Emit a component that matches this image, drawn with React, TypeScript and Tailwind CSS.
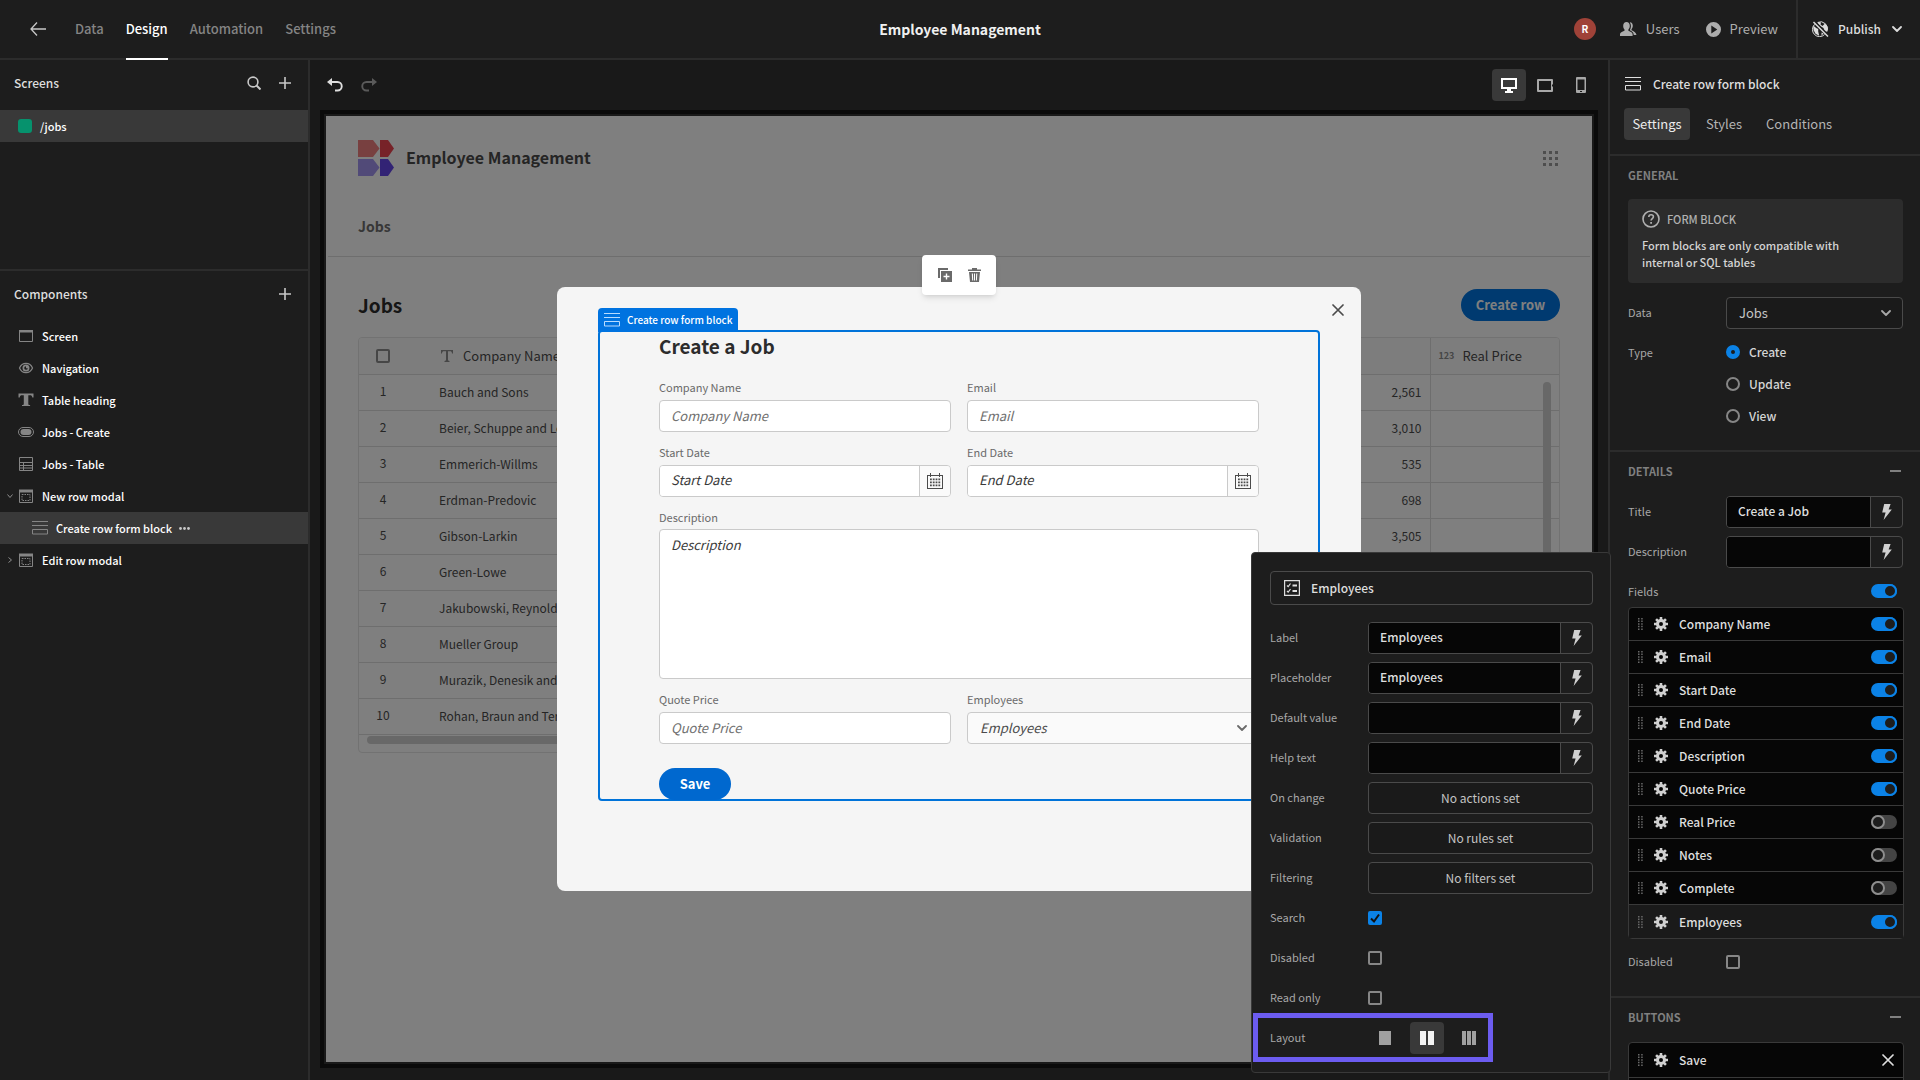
import { useId } from 'react';
import type { ReactNode } from 'react';

const COMPONENT_TREE = [
  { label: 'Screen', icon: 'screen' },
  { label: 'Navigation', icon: 'eye' },
  { label: 'Table heading', icon: 'text' },
  { label: 'Jobs - Create', icon: 'button' },
  { label: 'Jobs - Table', icon: 'table' },
  { label: 'New row modal', icon: 'modal', open: true },
  { label: 'Create row form block', icon: 'form', child: true },
  { label: 'Edit row modal', icon: 'modal', open: false },
];

const JOBS = [
  { name: 'Bauch and Sons', quote: '2,561' },
  { name: 'Beier, Schuppe and Lehner', quote: '3,010' },
  { name: 'Emmerich-Willms', quote: '535' },
  { name: 'Erdman-Predovic', quote: '698' },
  { name: 'Gibson-Larkin', quote: '3,505' },
  { name: 'Green-Lowe', quote: '1,240' },
  { name: 'Jakubowski, Reynolds and Co', quote: '2,118' },
  { name: 'Mueller Group', quote: '904' },
  { name: 'Murazik, Denesik and Sons', quote: '1,777' },
  { name: 'Rohan, Braun and Terry', quote: '2,032' },
];

const FIELDS = [
  { name: 'Company Name', on: true },
  { name: 'Email', on: true },
  { name: 'Start Date', on: true },
  { name: 'End Date', on: true },
  { name: 'Description', on: true },
  { name: 'Quote Price', on: true },
  { name: 'Real Price', on: false },
  { name: 'Notes', on: false },
  { name: 'Complete', on: false },
  { name: 'Employees', on: true },
];

/* ---------- icons ---------- */

function FormIcon() {
  return (
    <svg width="16" height="14" viewBox="0 0 16 14" fill="none" stroke="currentColor">
      <path d="M0 .5h16M0 4.5h16M.5 8.5h15v4.5H.5z" />
    </svg>
  );
}

function PlusIcon() {
  return (
    <svg width="12" height="12" viewBox="0 0 12 12" stroke="currentColor" strokeWidth="1.6">
      <path d="M6 0v12M0 6h12" />
    </svg>
  );
}

function ChevronIcon() {
  return (
    <svg width="10" height="6" viewBox="0 0 10 6" fill="none" stroke="currentColor" strokeWidth="1.8" strokeLinecap="round" strokeLinejoin="round">
      <path d="M1 1l4 4 4-4" />
    </svg>
  );
}

function CrossIcon() {
  return (
    <svg width="12" height="12" viewBox="0 0 12 12" stroke="currentColor" strokeWidth="1.7" strokeLinecap="round">
      <path d="M1 1l10 10M11 1L1 11" />
    </svg>
  );
}

function BoltIcon() {
  return (
    <svg width="10" height="16" viewBox="0 0 10 16" fill="currentColor">
      <path d="M2.2 0H8.6L6.6 5.4H9.8L1.6 16 3.6 8.6H.2z" />
    </svg>
  );
}

function GearIcon() {
  return (
    <svg width="14" height="14" viewBox="-7 -7 14 14" fill="currentColor">
      <circle r="3.5" fill="none" stroke="currentColor" strokeWidth="3" />
      {[0, 45, 90, 135].map((a) => (
        <path key={a} transform={`rotate(${a})`} d="M-1.3-7h2.6v3h-2.6zM-1.3 4h2.6v3h-2.6z" />
      ))}
    </svg>
  );
}

function GripIcon() {
  return (
    <svg width="5" height="12" viewBox="0 0 5 12" fill="currentColor">
      {[0, 2.6, 5.2, 7.8, 10.4].map((y) => (
        <path key={y} d={`M0 ${y}h1.5v1.5H0zM3.2 ${y}h1.5v1.5H3.2z`} />
      ))}
    </svg>
  );
}

function CalendarIcon() {
  return (
    <svg width="18" height="16" viewBox="0 0 18 16" fill="currentColor">
      <path fillRule="evenodd" d="M4 0h1v2h8V0h1v2h3v14H1V2h3zM2 3v12h14V3h-2v1h-1V3H5v1H4V3z" />
      {[5.4, 8.4, 11.4].map((y) => (
        <path key={y} d={`M4 ${y}h1.8v1.8H4zM6.8 ${y}h1.8v1.8H6.8zM9.6 ${y}h1.8v1.8H9.6zM12.4 ${y}h1.8v1.8H12.4z`} />
      ))}
    </svg>
  );
}

function TreeIcon({ type }: { type: string }) {
  if (type === 'form') return <FormIcon />;
  return (
    <svg width="16" height="14" viewBox="0 0 16 14" fill="none" stroke="currentColor">
      {type === 'screen' && (
        <>
          <path d="M1.5 1.5h13v11h-13z" />
          <path d="M1 1h14v2.5H1z" fill="currentColor" stroke="none" />
        </>
      )}
      {type === 'eye' && (
        <>
          <path d="M1.5 7C4 .8 12 .8 14.5 7 12 13.2 4 13.2 1.5 7z" strokeWidth="1.2" />
          <path fillRule="evenodd" d="M8 3.5a3.5 3.5 0 100 7 3.5 3.5 0 000-7zM8 5.2v2h1.8A1.8 1.8 0 118 5.2z" fill="currentColor" stroke="none" />
        </>
      )}
      {type === 'text' && (
        <path d="M.5.5h15v4h-1.2c-.3-1.6-.8-2.2-2.3-2.2h-1.7v8.4c0 1 .3 1.3 1.8 1.4v1H4v-1c1.5-.1 1.8-.4 1.8-1.4V2.3H4c-1.5 0-2 .6-2.3 2.2H.5z" fill="currentColor" stroke="none" />
      )}
      {type === 'button' && (
        <>
          <rect x=".5" y="2.5" width="15" height="9" rx="4.5" />
          <rect x="2.5" y="4" width="11" height="6" rx="3" fill="currentColor" stroke="none" />
        </>
      )}
      {type === 'table' && <path d="M1.5.5h13v13h-13zM1.5 5.5h13M1.5 8.5h13M1.5 11h13M5.5 5.5v8" />}
      {type === 'modal' && (
        <>
          <path d="M1.5 1.5h13v12h-13z" />
          <path d="M1 .5h14v3H1z" fill="currentColor" stroke="none" />
          <path d="M4 5.5h8v6H4z" strokeDasharray="1.5 1" />
        </>
      )}
    </svg>
  );
}

/* ---------- shared controls ---------- */

function Switch({ label, on }: { label: string; on: boolean }) {
  return (
    <input
      type="checkbox"
      aria-label={label}
      defaultChecked={on}
      className="relative h-[14px] w-[26px] shrink-0 appearance-none rounded-full bg-[#444444] before:absolute before:left-0 before:top-0 before:size-[14px] before:rounded-full before:border-2 before:border-[#8e8e8e] before:bg-[#1d1d1d] checked:bg-[#0b82e6] checked:before:left-[12px] checked:before:border-[#0b82e6]"
    />
  );
}

function Checkbox({ id, on = false }: { id: string; on?: boolean }) {
  return (
    <span className="relative block size-[14px]">
      <input
        id={id}
        type="checkbox"
        defaultChecked={on}
        className="peer block size-[14px] appearance-none rounded-[2px] border-2 border-[#868686] checked:border-[#0b82e6] checked:bg-[#0b82e6]"
      />
      <svg className="pointer-events-none absolute inset-0 hidden text-[#111111] peer-checked:block" width="14" height="14" viewBox="0 0 14 14" fill="none" stroke="currentColor" strokeWidth="2">
        <path d="M3 7.5l3 3 5-7" />
      </svg>
    </span>
  );
}

function SettingRow({ label, htmlFor, children }: { label: string; htmlFor?: string; children: ReactNode }) {
  return (
    <div className="flex min-h-8 items-center">
      <label htmlFor={htmlFor} className="w-[98px] shrink-0 pb-[2px] text-[11px] text-[#a8a8a8]">{label}</label>
      {children}
    </div>
  );
}

function BindingInput({ label, value = '' }: { label: string; value?: string }) {
  const id = useId();
  return (
    <SettingRow label={label} htmlFor={id}>
      <div className="flex h-8 min-w-0 flex-1 overflow-hidden rounded border border-[#4a4a4a]">
        <input id={id} defaultValue={value} className="min-w-0 flex-1 bg-[#060606] px-[11px] pb-[2px] text-[12px] font-medium text-[#dedede]" />
        <button aria-label={`Bind ${label}`} className="flex w-8 items-center justify-center border-l border-[#4a4a4a] text-[#d0d0d0]">
          <BoltIcon />
        </button>
      </div>
    </SettingRow>
  );
}

function ActionRow({ label, text }: { label: string; text: string }) {
  const id = useId();
  return (
    <SettingRow label={label} htmlFor={id}>
      <button id={id} className="h-8 flex-1 rounded border border-[#4a4a4a] bg-[#1a1a1a] text-[12px] text-[#c4c4c4]">{text}</button>
    </SettingRow>
  );
}

function CheckRow({ label, on }: { label: string; on?: boolean }) {
  const id = useId();
  return (
    <SettingRow label={label} htmlFor={id}>
      <Checkbox id={id} on={on} />
    </SettingRow>
  );
}

/* ---------- header ---------- */

function Header() {
  return (
    <header className="grid h-[60px] shrink-0 grid-cols-[1fr_auto_1fr] border-b-2 border-[#2c2c2c] text-[13px]">
      <div className="flex items-center pl-[30px]">
        <button aria-label="Back" className="mr-[29px] text-[#c8c8c8]">
          <svg width="16" height="14" viewBox="0 0 16 14" fill="none" stroke="currentColor" strokeWidth="1.3">
            <path d="M7 .5L1 7l6 6.5M1 7h15" />
          </svg>
        </button>
        <nav className="-mb-[2px] flex gap-[22px] self-stretch font-medium text-[#848484]">
          <a href="#data" className="flex items-center border-b-2 border-transparent">Data</a>
          <a href="#design" className="flex items-center border-b-2 border-white text-white">Design</a>
          <a href="#automation" className="flex items-center border-b-2 border-transparent">Automation</a>
          <a href="#settings" className="flex items-center border-b-2 border-transparent">Settings</a>
        </nav>
      </div>
      <h1 className="self-center text-[14px] font-bold text-[#f0f0f0]">Employee Management</h1>
      <div className="flex items-center justify-end text-[#adadad]">
        <span className="mr-6 flex size-[22px] items-center justify-center rounded-full bg-[#9f4238] text-[10px] font-bold text-white">R</span>
        <button className="mr-[26px] flex items-center gap-[9px]">
          <svg width="17" height="14" viewBox="0 0 17 14" fill="currentColor">
            <path d="M6.5 0C8.5 0 9.8 1.5 9.8 3.8c0 1.7-.6 2.9-1.4 3.7v1.2c2.3.8 4.1 1.7 4.2 3.6V14H0v-1.7c.1-1.9 2-2.8 4.5-3.6V7.5C3.7 6.7 3.2 5.5 3.2 3.8 3.2 1.5 4.5 0 6.5 0z" />
            <path d="M9.8.3c2 .1 3 1.6 3 3.5 0 1.6-.6 2.7-1.3 3.4v1c2.2.9 4.5 2 5 4.8h-2.7c-.2-2.6-1.9-4-4-4.7 1.5-2.6 1.6-5.6 0-8z" />
          </svg>
          Users
        </button>
        <button className="mr-[18px] flex items-center gap-[9px]">
          <svg width="15" height="15" viewBox="0 0 15 15" fill="currentColor">
            <path fillRule="evenodd" d="M7.5 0a7.5 7.5 0 110 15 7.5 7.5 0 010-15zM5.3 3.5v8l6-4z" />
          </svg>
          Preview
        </button>
        <button className="flex items-center gap-[9px] self-stretch border-l-2 border-[#2c2c2c] pl-[14px] pr-[18px] text-[12px] font-medium text-[#dcdcdc]">
          <svg width="17" height="16" viewBox="0 0 17 16" fill="none">
            <path d="M6 1.2l3 .3-.5 2 2 1.5L13 2.5l2 2.5 1 3-2 3.5-2-1.5-.5-3-3-1.5-3-3zM1.2 4.5l3 2.5 2 1v2.5l1 4.3-3.7-2L1.5 9zM9.5 11.5l2 1-2 2.3z" fill="currentColor" />
            <path d="M2.6 3.4A7 7 0 0012.5 13.6M5.5 1.5A7 7 0 0115 10.5" stroke="currentColor" strokeWidth="1" />
            <path d="M2.5.3L17 14.8" stroke="#1d1d1d" strokeWidth="2" />
            <path d="M1.5 1L16 15.5" stroke="currentColor" strokeWidth="1.5" />
          </svg>
          Publish
          <span className="ml-[2px]"><ChevronIcon /></span>
        </button>
      </div>
    </header>
  );
}

/* ---------- left panel ---------- */

function LeftPanel() {
  return (
    <aside className="flex w-[310px] shrink-0 flex-col border-r-2 border-[#2c2c2c]">
      <section className="h-[211px] border-b-2 border-[#2c2c2c]">
        <div className="flex h-[50px] items-center pb-1 pl-[14px] pr-[17px] text-[#c8c8c8]">
          <h2 className="flex-1 text-[12px] font-medium text-[#dedede]">Screens</h2>
          <button aria-label="Search screens" className="mr-[18px]">
            <svg width="14" height="14" viewBox="0 0 14 14" fill="none" stroke="currentColor" strokeWidth="1.6">
              <circle cx="6" cy="6" r="4.9" />
              <path d="M9.5 9.5L13.5 13.5" strokeWidth="2" />
            </svg>
          </button>
          <button aria-label="Add screen"><PlusIcon /></button>
        </div>
        <button className="flex h-8 w-full items-center gap-2 bg-[#393939] pl-[18px] text-[11px] font-medium text-white">
          <span className="size-[14px] rounded-[3px] bg-[#06926d]" />
          /jobs
        </button>
      </section>
      <section>
        <div className="flex h-[49px] items-center pb-1 pl-[14px] pr-[17px] text-[#c8c8c8]">
          <h2 className="flex-1 text-[12px] font-medium text-[#dedede]">Components</h2>
          <button aria-label="Add component"><PlusIcon /></button>
        </div>
        <ul>
          {COMPONENT_TREE.map((node) => (
            <li key={node.label} className={node.child ? 'flex h-8 items-center bg-[#393939] pl-[14px]' : 'flex h-8 items-center'}>
              <span className="flex w-[18px] shrink-0 justify-center pl-[2px] text-[#8e8e8e]">
                {node.open !== undefined && (
                  <svg width="6" height="6" viewBox="0 0 6 6" fill="none" stroke="currentColor" strokeWidth="1">
                    <path d={node.open ? 'M.5 1.5L3 4.5l2.5-3' : 'M1.5.5L4.5 3l-3 2.5'} />
                  </svg>
                )}
              </span>
              <button className="flex items-center gap-2 text-[11px] font-medium text-white">
                <span className="text-[#858585]"><TreeIcon type={node.icon} /></span>
                {node.label}
              </button>
              {node.child && (
                <button aria-label="More actions" className="ml-[7px] text-[#c8c8c8]">
                  <svg width="11" height="3" viewBox="0 0 11 3" fill="currentColor">
                    <circle cx="1.5" cy="1.5" r="1.4" />
                    <circle cx="5.5" cy="1.5" r="1.4" />
                    <circle cx="9.5" cy="1.5" r="1.4" />
                  </svg>
                </button>
              )}
            </li>
          ))}
        </ul>
      </section>
    </aside>
  );
}

/* ---------- canvas ---------- */

function CanvasToolbar() {
  return (
    <div className="flex h-[50px] shrink-0 items-center pl-[17px] pr-[10px]">
      <button aria-label="Undo" className="mr-[18px] text-[#dedede]">
        <svg width="16" height="14" viewBox="0 0 16 14" fill="none" stroke="currentColor" strokeWidth="1.9">
          <path d="M2 4h8.5a4 4 0 010 8.5H8" />
          <path d="M5 0v8L0 4z" fill="currentColor" stroke="none" />
        </svg>
      </button>
      <button aria-label="Redo" className="text-[#5a5a5a]">
        <svg width="16" height="14" viewBox="0 0 16 14" fill="none" stroke="currentColor" strokeWidth="1.9">
          <path d="M14 4H5.5a4 4 0 000 8.5H8" />
          <path d="M11 0v8l5-4z" fill="currentColor" stroke="none" />
        </svg>
      </button>
      <div className="ml-auto flex gap-[2px] text-[#a8a8a8]">
        <button aria-label="Desktop" className="flex h-8 w-[34px] items-center justify-center rounded bg-[#393939] text-white">
          <svg width="16" height="15" viewBox="0 0 16 15" fill="currentColor">
            <path fillRule="evenodd" d="M0 0h16v11h-6v2h2v2H4v-2h2v-2H0zM2 2v7h12V2z" />
          </svg>
        </button>
        <button aria-label="Tablet" className="flex h-8 w-[34px] items-center justify-center">
          <svg width="16" height="13" viewBox="0 0 16 13" fill="currentColor">
            <path fillRule="evenodd" d="M1 0h14a1 1 0 011 1v4.5h-1v2h1V12a1 1 0 01-1 1H1a1 1 0 01-1-1V1a1 1 0 011-1zM2 2v9h12V2z" />
          </svg>
        </button>
        <button aria-label="Mobile" className="flex h-8 w-[34px] items-center justify-center">
          <svg width="10" height="16" viewBox="0 0 10 16" fill="currentColor">
            <path fillRule="evenodd" d="M1 0h8a1 1 0 011 1v14a1 1 0 01-1 1H1a1 1 0 01-1-1V1a1 1 0 011-1zM1.5 2.5v10.5h7V2.5zM4 14v1h2v-1z" />
          </svg>
        </button>
      </div>
    </div>
  );
}

function JobsScreen() {
  return (
    <div className="text-[#4b4b4b]">
      <div className="flex h-[84px] items-center pl-8 pr-[34px]">
        <svg width="36" height="36" viewBox="0 0 36 36" className="mr-3">
          <path d="M0 0h15l6.5 8.5L15 17H0z" fill="#f08080" />
          <path d="M22 0h8l6 8.5L30 17h-8z" fill="#ee4450" />
          <path d="M0 19h15l6.5 8.5L15 36H0z" fill="#a294f0" />
          <path d="M22 19h8l6 8.5L30 36h-8z" fill="#6547ea" />
        </svg>
        <h2 className="flex-1 pb-[2px] text-[16px] font-bold">Employee Management</h2>
        <svg width="15" height="15" viewBox="0 0 15 15" fill="#9c9c9c">
          {[0, 6, 12].map((y) => (
            <path key={y} d={`M0 ${y}h3v3H0zM6 ${y}h3v3H6zM12 ${y}h3v3h-3z`} />
          ))}
        </svg>
      </div>
      <nav className="mx-[2px] flex h-[57px] items-center border-b border-[#dcdcdc] px-[30px] pb-1 text-[14px] font-bold text-[#6e6e6e]">
        <a href="#jobs">Jobs</a>
      </nav>
      <div className="px-8">
        <div className="flex h-20 items-center justify-between pt-4">
          <h3 className="text-[19px] font-bold text-[#2c2c2c]">Jobs</h3>
          <button className="h-8 w-[99px] rounded-full bg-[#0074e0] text-[13px] font-bold text-white">Create row</button>
        </div>
        <div className="relative h-[416px] overflow-hidden rounded border border-[#e4e4e4] text-[12px]">
          <table className="w-full table-fixed border-collapse">
            <thead>
              <tr className="h-9 border-b border-[#dcdcdc] bg-[#fbfbfb] text-left text-[13px]">
                <th className="w-[48px]">
                  <input type="checkbox" aria-label="Select all rows" className="mx-auto block size-[14px] appearance-none rounded-[2px] border-2 border-[#8c8c8c]" />
                </th>
                <th className="font-normal">
                  <span className="flex items-center gap-[10px] pl-[34px]">
                    <svg width="12" height="12" viewBox="0 0 12 12" fill="#8c8c8c">
                      <path d="M0 0h12v3.5h-1C10.7 1.6 10.3 1.3 9 1.3H7v8.2c0 1 .3 1.3 1.5 1.4V12h-5v-1.1C4.7 10.8 5 10.5 5 9.5V1.3H3C1.7 1.3 1.3 1.6 1 3.5H0z" />
                    </svg>
                    Company Name
                  </span>
                </th>
                <th className="w-[220px] border-r border-[#dcdcdc] font-normal">Quote Price</th>
                <th className="w-[129px] font-normal">
                  <span className="flex items-center gap-2 pl-2">
                    <span className="text-[9px] font-bold text-[#8c8c8c]">123</span>
                    Real Price
                  </span>
                </th>
              </tr>
            </thead>
            <tbody>
              {JOBS.map((job, i) => (
                <tr key={job.name} className="h-9 border-b border-[#dcdcdc]">
                  <td className="pb-[2px] text-center">{i + 1}</td>
                  <td className="overflow-hidden whitespace-nowrap pl-8">{job.name}</td>
                  <td className="border-r border-[#dcdcdc] pr-2 text-right">{job.quote}</td>
                  <td />
                </tr>
              ))}
            </tbody>
          </table>
          <div className="absolute bottom-2 left-2 right-[200px] h-2 rounded-full bg-[#d0d0d0]" />
          <div className="absolute bottom-[80px] right-2 top-[44px] w-2 rounded-full bg-[#d0d0d0]" />
        </div>
      </div>
    </div>
  );
}

function TextField({ label }: { label: string }) {
  const id = useId();
  return (
    <div>
      <label htmlFor={id} className="block h-[25px] text-[11px] leading-[25px] text-[#6a6a6a]">{label}</label>
      <input id={id} placeholder={label} className="block h-8 w-full rounded border border-[#cacaca] bg-white px-[11px] pb-[2px] text-[13px] placeholder:italic placeholder:text-[#707070]" />
    </div>
  );
}

function DateField({ label }: { label: string }) {
  const id = useId();
  return (
    <div>
      <label htmlFor={id} className="block h-[25px] text-[11px] leading-[25px] text-[#6a6a6a]">{label}</label>
      <div className="flex h-8 overflow-hidden rounded border border-[#cacaca]">
        <input id={id} placeholder={label} className="min-w-0 flex-1 bg-white px-[11px] pb-[2px] text-[13px] placeholder:italic placeholder:text-[#3a3a3a]" />
        <button aria-label={`Pick ${label}`} className="flex w-[31px] items-center justify-center border-l border-[#cacaca] bg-[#fafafa] text-[#4b4b4b]">
          <CalendarIcon />
        </button>
      </div>
    </div>
  );
}

function CreateModal() {
  return (
    <div role="dialog" aria-label="Create a Job" className="relative w-[804px] rounded-lg bg-[#f5f5f5] px-[41px] pb-[90px] pt-[43px]">
      <button aria-label="Close" className="absolute right-[17px] top-[17px] text-[#4b4b4b]"><CrossIcon /></button>
      <div className="relative rounded-sm border-2 border-[#0073d9] px-[59px]">
        <div className="absolute -left-[2px] -top-6 flex h-6 items-center gap-[7px] rounded-t bg-[#0073e0] px-[6px] text-[10px] font-medium text-white">
          <span className="text-[#b8dcff]"><FormIcon /></span>
          Create row form block
        </div>
        <div className="absolute -top-[77px] left-1/2 flex h-10 w-[74px] -translate-x-1/2 items-center justify-center gap-4 rounded bg-white text-[#6a6a6a] shadow-md">
          <button aria-label="Duplicate">
            <svg width="14" height="14" viewBox="0 0 14 14" fill="currentColor">
              <path d="M0 0h10v2H2v8H0z" />
              <path fillRule="evenodd" d="M3 3h11v11H3zM7.8 5.5v2.3H5.5v1.4h2.3v2.3h1.4V9.2h2.3V7.8H9.2V5.5z" />
            </svg>
          </button>
          <button aria-label="Delete">
            <svg width="13" height="14" viewBox="0 0 13 14" fill="currentColor">
              <path fillRule="evenodd" d="M4 0h5v1.5h4V3H0V1.5h4zM1 4h11l-1 10H2zM3.8 5.5l.4 7h1l-.3-7zM6 5.5v7h1v-7zM8.2 5.5l-.3 7h1l.4-7z" />
            </svg>
          </button>
        </div>
        <h2 className="mb-4 h-[27px] text-[19px] font-bold leading-[27px] text-[#2c2c2c]">Create a Job</h2>
        <form className="-mb-px grid grid-cols-2 gap-x-4 gap-y-2" onSubmit={(e) => e.preventDefault()}>
          <TextField label="Company Name" />
          <TextField label="Email" />
          <DateField label="Start Date" />
          <DateField label="End Date" />
          <div className="col-span-2">
            <label htmlFor="job-description" className="block h-6 text-[11px] leading-6 text-[#6a6a6a]">Description</label>
            <textarea id="job-description" placeholder="Description" className="block h-[150px] w-full resize-none rounded border border-[#cacaca] bg-white px-[11px] py-[6px] text-[13px] placeholder:italic placeholder:text-[#3a3a3a]" />
          </div>
          <TextField label="Quote Price" />
          <div>
            <label htmlFor="job-employees" className="block h-[25px] text-[11px] leading-[25px] text-[#6a6a6a]">Employees</label>
            <div className="relative">
              <select id="job-employees" className="block h-8 w-full appearance-none rounded border border-[#cacaca] bg-[#fafafa] px-3 text-[13px] italic text-[#4b4b4b]">
                <option>Employees</option>
              </select>
              <span className="pointer-events-none absolute right-3 top-[13px] text-[#6a6a6a]"><ChevronIcon /></span>
            </div>
          </div>
          <button className="mt-4 h-8 w-[72px] rounded-full bg-[#0068cf] text-[13px] font-bold text-white">Save</button>
        </form>
      </div>
    </div>
  );
}

function Canvas() {
  return (
    <main className="flex min-w-0 flex-1 flex-col bg-[#191919] pb-3">
      <CanvasToolbar />
      <div className="mx-[10px] min-h-0 flex-1 border-4 border-[#0a0a0a] bg-[#191919] p-[2px]">
        <div className="relative h-full overflow-hidden bg-white">
          <JobsScreen />
          <div className="absolute inset-0 flex items-center justify-center bg-black/50">
            <CreateModal />
          </div>
        </div>
      </div>
    </main>
  );
}

/* ---------- settings panel ---------- */

function SectionTitle({ title, collapsible = true }: { title: string; collapsible?: boolean }) {
  return (
    <div className="flex h-[39px] items-center justify-between pb-[2px] pr-[2px]">
      <h3 className="text-[11px] font-bold text-[#808080]">{title}</h3>
      {collapsible && (
        <button aria-label={`Collapse ${title}`} className="flex h-4 items-center"><span className="h-[2px] w-[11px] bg-[#808080]" /></button>
      )}
    </div>
  );
}

function SettingsPanel() {
  return (
    <aside className="flex w-[312px] shrink-0 flex-col overflow-hidden border-l-2 border-[#2c2c2c]">
      <div className="h-[96px] shrink-0 border-b-2 border-[#2c2c2c] px-[14px]">
        <div className="flex h-12 items-center gap-3 pl-px text-[12px] font-medium text-[#dedede]">
          <FormIcon />
          <h2>Create row form block</h2>
        </div>
        <div className="flex gap-4 text-[13px] text-[#b4b4b4]">
          <button className="h-8 w-[66px] rounded bg-[#393939] text-[#ececec]">Settings</button>
          <button className="h-8">Styles</button>
          <button className="ml-2 h-8">Conditions</button>
        </div>
      </div>

      <section className="h-[296px] shrink-0 border-b-2 border-[#2c2c2c] pl-[18px] pr-[17px]">
        <SectionTitle title="GENERAL" collapsible={false} />
        <div className="mb-[14px] mt-1 h-[84px] rounded bg-[#2c2c2c] pl-[14px] pr-10 pt-[11px]">
          <div className="flex items-center gap-[7px] text-[11px] font-medium leading-[18px] text-[#b0b0b0]">
            <svg width="18" height="18" viewBox="0 0 18 18" fill="none" stroke="currentColor" strokeWidth="1.6">
              <circle cx="9" cy="9" r="8" />
              <path d="M6.8 7c0-3 4.6-2.8 4.6-.2 0 1.7-2.3 1.8-2.3 3.7" />
              <path d="M8.2 12.8h1.8" strokeWidth="1.8" />
            </svg>
            FORM BLOCK
          </div>
          <p className="mt-[9px] text-[11px] font-medium leading-[17px] text-[#d4d4d4]">Form blocks are only compatible with internal or SQL tables</p>
        </div>
        <SettingRow label="Data" htmlFor="data-source">
          <div className="relative flex-1">
            <select id="data-source" className="block h-8 w-full appearance-none rounded border border-[#4a4a4a] bg-[#1a1a1a] px-3 text-[13px] text-[#c4c4c4]">
              <option>Jobs</option>
            </select>
            <span className="pointer-events-none absolute right-3 top-[13px] text-[#a8a8a8]"><ChevronIcon /></span>
          </div>
        </SettingRow>
        <fieldset className="mt-[7px] flex">
          <legend className="float-left w-[98px] text-[11px] leading-8 text-[#a8a8a8]">Type</legend>
          <div>
            {['Create', 'Update', 'View'].map((type, i) => (
              <label key={type} className="flex h-8 items-center gap-[9px] text-[12px] font-medium text-[#d4d4d4]">
                <input
                  type="radio"
                  name="form-type"
                  defaultChecked={i === 0}
                  className="size-[14px] appearance-none rounded-full border-2 border-[#868686] checked:border-[5px] checked:border-[#0b82e6]"
                />
                {type}
              </label>
            ))}
          </div>
        </fieldset>
      </section>

      <section className="h-[546px] shrink-0 border-b-2 border-[#2c2c2c] pl-[18px] pr-[17px]">
        <SectionTitle title="DETAILS" />
        <div className="mt-[5px] flex flex-col gap-2">
          <BindingInput label="Title" value="Create a Job" />
          <BindingInput label="Description" />
        </div>
        <div className="flex h-[39px] items-center justify-between pr-[6px] pt-[7px] text-[11px] text-[#a8a8a8]">
          <span>Fields</span>
          <Switch label="All fields" on />
        </div>
        <ul className="-mr-px rounded border border-[#393939] bg-[#060606]">
          {FIELDS.map((field) => (
            <li key={field.name} className="flex h-[33px] items-center border-b border-[#393939] pl-[9px] pr-[6px] last:border-b-0 last:bg-[#1a1a1a]">
              <span className="text-[#6a6a6a]"><GripIcon /></span>
              <button aria-label={`Edit ${field.name}`} className="ml-[11px] mr-[11px] text-[#d0d0d0]"><GearIcon /></button>
              <span className="flex-1 text-[12px] font-medium text-[#dedede]">{field.name}</span>
              <Switch label={field.name} on={field.on} />
            </li>
          ))}
        </ul>
        <div className="mt-[7px]"><CheckRow label="Disabled" /></div>
      </section>

      <section className="shrink-0 pl-[18px] pr-[17px]">
        <SectionTitle title="BUTTONS" />
        <ul className="-mr-px mt-[5px] rounded border border-[#393939] bg-[#060606]">
          <li className="flex h-[35px] items-center border-b border-[#393939] px-[9px]">
            <span className="text-[#6a6a6a]"><GripIcon /></span>
            <button aria-label="Edit Save" className="ml-[11px] mr-[11px] text-[#d0d0d0]"><GearIcon /></button>
            <span className="flex-1 text-[12px] font-medium text-[#dedede]">Save</span>
            <button aria-label="Remove Save" className="text-[#dedede]"><CrossIcon /></button>
          </li>
          <li className="h-[33px]" />
        </ul>
      </section>
    </aside>
  );
}

/* ---------- field popover ---------- */

function FieldPopover() {
  return (
    <div className="absolute bottom-[7px] right-[309px] w-[360px] rounded border border-[#393939] bg-[#1d1d1d] pb-[18px] pl-[18px] pr-[17px] pt-[18px]">
      <div className="mb-[17px] flex h-[34px] items-center gap-[11px] rounded border border-[#4a4a4a] px-[13px] text-[12px] font-medium text-[#dedede]">
        <svg width="16" height="16" viewBox="0 0 16 16" fill="none" stroke="currentColor" strokeWidth="1.2">
          <path d="M.6.6h14.8v14.8H.6z" />
          <path d="M3 5.5l1.2 1.2L6.5 3.5M3 11l1.2 1.2L6.5 9" />
          <path d="M8.5 5.5h4.5M8.5 11h4.5" strokeWidth="2" />
        </svg>
        Employees
      </div>
      <div className="flex flex-col gap-2">
        <BindingInput label="Label" value="Employees" />
        <BindingInput label="Placeholder" value="Employees" />
        <BindingInput label="Default value" />
        <BindingInput label="Help text" />
        <ActionRow label="On change" text="No actions set" />
        <ActionRow label="Validation" text="No rules set" />
        <ActionRow label="Filtering" text="No filters set" />
        <CheckRow label="Search" on />
        <CheckRow label="Disabled" />
        <CheckRow label="Read only" />
        <div className="relative flex h-8 items-center">
          <span className="w-[98px] pb-[2px] text-[11px] text-[#a8a8a8]">Layout</span>
          <div role="group" aria-label="Layout" className="flex gap-2 text-[#a0a0a0]">
            <button aria-label="One column" className="flex h-8 w-[34px] items-center justify-center">
              <svg width="12" height="14" viewBox="0 0 12 14" fill="currentColor"><path d="M0 0h12v14H0z" /></svg>
            </button>
            <button aria-label="Two columns" className="flex h-8 w-[34px] items-center justify-center rounded bg-[#393939] text-[#f4f4f4]">
              <svg width="14" height="14" viewBox="0 0 14 14" fill="currentColor"><path d="M0 0h6v14H0zM8 0h6v14H8z" /></svg>
            </button>
            <button aria-label="Three columns" className="flex h-8 w-[34px] items-center justify-center">
              <svg width="14" height="14" viewBox="0 0 14 14" fill="currentColor"><path d="M0 0h4v14H0zM5 0h4v14H5zM10 0h4v14h-4z" /></svg>
            </button>
          </div>
          <div className="pointer-events-none absolute -left-[17px] -top-[9px] h-[49px] w-[240px] border-[5px] border-[#6c5cf0]" />
        </div>
      </div>
    </div>
  );
}

export default function App() {
  return (
    <div className="relative flex h-screen flex-col overflow-hidden bg-[#1d1d1d] font-['Noto_Sans_CJK_SC','Noto_Sans',sans-serif] leading-[18px]">
      <Header />
      <div className="flex min-h-0 flex-1">
        <LeftPanel />
        <Canvas />
        <SettingsPanel />
      </div>
      <FieldPopover />
    </div>
  );
}
